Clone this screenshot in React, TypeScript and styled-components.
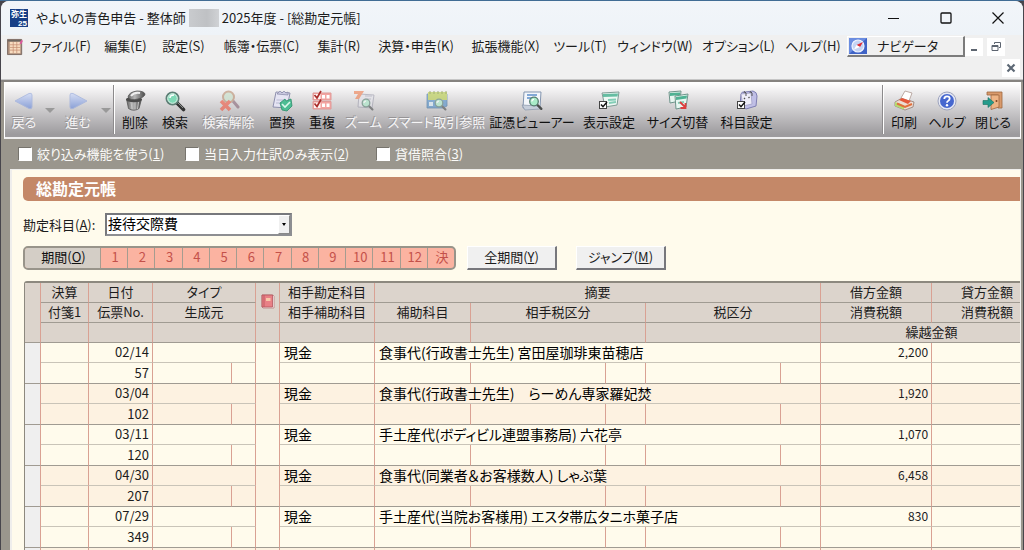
import React from "react";
import styled, { createGlobalStyle, css } from "styled-components";

const c = {
  cream: "#fffbec",
  alt: "#fdf2e1",
  head: "#dcd4cc",
  rule: "#a09b92",
  softRule: "#c9c4b8",
  red: "#d9a193",
  frame: "#9a968d",
  title: "#c48868",
};

const GlobalStyle = createGlobalStyle`
  *, *::before, *::after { box-sizing: border-box; }
  body {
    margin: 0;
    font-family: "Noto Sans CJK JP", "Noto Sans", sans-serif;
    font-size: 13px;
    line-height: 18px;
    font-feature-settings: "palt";
    color: #1c1c1c;
  }
  button, select, input { font: inherit; font-feature-settings: inherit; color: inherit; margin: 0; }
`;

const Desktop = styled.div`
  height: 100vh;
  overflow: hidden;
  padding: 0 1px;
  border-top: 1px solid #416c94;
  background: #47454c;
  display: flex;
  flex-direction: column;
`;
const Window = styled.div`
  flex: 1;
  min-height: 0;
  display: flex;
  flex-direction: column;
  border-radius: 8px 8px 0 0;
  overflow: hidden;
  background: #f0f0f0;
`;
const TitleBar = styled.header`
  height: 34px;
  flex: none;
  display: flex;
  align-items: center;
  padding: 0 14px 1px 9px;
  background: linear-gradient(#f2f5f9, #eef3f8);
`;
const TitleText = styled.div`
  display: flex;
  align-items: center;
  gap: 3px;
  padding-left: 8px;
  flex: 1;
  white-space: nowrap;
`;
const Redacted = styled.span`
  width: 30px;
  height: 18px;
  background: linear-gradient(90deg, #c9cbce, #bfc1c4 60%, #d0d2d5);
`;
const CaptionButtons = styled.div`
  display: flex;
  gap: 30px;
`;
const CaptionButton = styled.button`
  border: 0;
  padding: 0;
  width: 22px;
  height: 22px;
  background: none;
  display: grid;
  place-items: center;
`;
const MenuBar = styled.nav`
  height: 23px;
  flex: none;
  display: flex;
  align-items: center;
  padding: 0 14px 0 6px;
`;
const MenuItem = styled.button<{ $w: number }>`
  width: ${(p) => p.$w}px;
  flex: none;
  border: 0;
  padding: 0 0 2px;
  background: none;
  text-align: center;
  white-space: nowrap;
`;
const NavigatorButton = styled.button`
  width: 118px;
  height: 21px;
  flex: none;
  display: flex;
  align-items: center;
  gap: 10px;
  padding: 0 0 0 1px;
  background: #f0f0f0;
  border: 1px solid #fff;
  border-right: 2px solid #7c7c7c;
  border-bottom: 2px solid #7c7c7c;
`;
const MdiRow = styled.div`
  height: 22px;
  flex: none;
  display: flex;
  justify-content: flex-end;
  padding: 1px 3px 0 0;
  border-bottom: 1px solid #c6c6c6;
`;
const MdiButton = styled.button`
  width: 18px;
  height: 18px;
  flex: none;
  border: 0;
  padding: 0;
  margin-right: 4px;
  background: #fff;
  display: grid;
  place-items: center;
  ${MdiRow} & { margin-right: 0; }
`;
const Client = styled.div`
  flex: 1;
  min-height: 0;
  display: flex;
  flex-direction: column;
  background: ${c.frame};
  border-top: 2px solid #868380;
  padding: 0 2px 0 3px;
`;
const Toolbar = styled.div`
  height: 57px;
  flex: none;
  display: flex;
  padding-right: 4px;
  border: 1px solid #fff;
  border-bottom: 2px solid #f0eff0;
  background: linear-gradient(#fff, #f3f2f3 12%, #9d9b9e 95%);
`;
const ToolButton = styled.button<{ $w: number }>`
  width: ${(p) => p.$w}px;
  flex: none;
  border: 0;
  padding: 7px 0 0;
  background: none;
  display: flex;
  flex-direction: column;
  align-items: center;
  white-space: nowrap;
  color: #111;
  svg { flex: none; }
  &:disabled {
    color: #f6f5f6;
    text-shadow: -1px -1px 0 #969496;
  }
  &:disabled svg { opacity: 0.6; }
`;
const ToolLabel = styled.span`
  height: 20px;
  line-height: 20px;
`;
const Drop = styled.button`
  width: 14px;
  flex: none;
  border: 0;
  padding: 0;
  background: none;
  &::after {
    content: "";
    display: block;
    margin: 0 auto;
    width: 10px;
    border: 5px solid transparent;
    border-top-color: #999;
    border-bottom: 0;
  }
`;
const Divider = styled.span<{ $push?: boolean }>`
  width: 2px;
  flex: none;
  margin: 2px 0 3px;
  border-left: 1px solid #8c8a8c;
  border-right: 1px solid #fff;
  ${(p) => p.$push && css`margin-left: auto;`}
`;
const FilterBar = styled.div`
  height: 30px;
  flex: none;
  display: grid;
  grid-template-columns: 167px 191px auto;
  align-items: center;
  padding-left: 14px;
`;
const CheckLabel = styled.label`
  display: flex;
  align-items: center;
  gap: 5px;
  color: #fbfaf8;
  white-space: nowrap;
  input {
    appearance: none;
    width: 14px;
    height: 14px;
    background: #fff;
    border: 1px solid #77746d;
    border-right-color: #fff;
    border-bottom-color: #fff;
  }
`;
const Content = styled.main`
  flex: 1;
  min-height: 0;
  margin-left: 6px;
  padding: 7px 0 0 11px;
  border: solid #efeeec;
  border-width: 1px 1px 0 2px;
  background: ${c.cream};
  overflow: hidden;
`;
const Heading = styled.h1`
  margin: 0 0 12px;
  height: 24px;
  line-height: 23px;
  padding-left: 13px;
  border-radius: 5px 0 0 5px;
  background: ${c.title};
  color: #fff;
  font-size: 16px;
  font-weight: 700;
`;
const AccountRow = styled.div`
  display: flex;
  align-items: center;
  gap: 7px;
  margin-bottom: 10px;
  label { width: 75px; white-space: nowrap; }
`;
const SelectBox = styled.span`
  position: relative;
  width: 187px;
  height: 23px;
  border: 2px solid #77787c;
  border-right-color: #8d8e92;
  border-bottom-color: #8d8e92;
  background: #fff;
  select {
    appearance: none;
    display: block;
    width: 100%;
    height: 19px;
    line-height: 17px;
    padding: 0 14px 2px 1px;
    border: 0;
    background: none;
    color: #000;
    font-size: 14px;
  }
`;
const SelectArrow = styled.span`
  position: absolute;
  right: 0;
  top: 0;
  width: 12px;
  height: 19px;
  background: #f0f0f0;
  border: 1px solid #fff;
  border-right-color: #888;
  border-bottom-color: #888;
  display: grid;
  place-items: center;
  pointer-events: none;
  &::after {
    content: "";
    border: 2px solid transparent;
    border-top: 3px solid #000;
    border-bottom: 0;
  }
`;
const PeriodRow = styled.div`
  display: flex;
  margin-bottom: 11px;
`;
const PeriodStrip = styled.div`
  width: 433px;
  height: 24px;
  margin-right: 11px;
  display: grid;
  grid-template-columns: 75px repeat(13, 1fr);
  border: 2px solid #98948a;
  border-radius: 5px;
  background: #fbb3a1;
  overflow: hidden;
`;
const PeriodButton = styled.button<{ $main?: boolean }>`
  border: 0;
  border-left: 1px solid #a59c90;
  padding: 0 0 2px 2px;
  background: none;
  color: #c4514a;
  line-height: 18px;
  ${(p) =>
    p.$main &&
    css`
      border-left: 0;
      background: #d4cec6;
      color: #111;
    `}
`;
const PushButton = styled.button`
  width: 90px;
  height: 24px;
  margin-right: 19px;
  padding: 0 0 2px;
  background: #f0f0f0;
  border: 1px solid #fff;
  border-right: 2px solid #77777c;
  border-bottom: 2px solid #77777c;
`;
const GridFrame = styled.div`
  margin-left: 1px;
  border-left: 1px solid #8d897f;
  border-top: 2px solid #8d897f;
  border-top-left-radius: 3px;
  overflow: hidden;
`;
const Grid = styled.table`
  table-layout: fixed;
  border-collapse: separate;
  border-spacing: 0;
  width: 100%;
  min-width: 1018px;
  line-height: 18px;
  th, td {
    padding: 0 0 1px;
    height: 20px;
    border-right: 1px solid ${c.red};
    white-space: nowrap;
    font-weight: 400;
  }
`;
const Th = styled.th`
  background: ${c.head};
  border-bottom: 1px solid ${c.rule};
  text-align: center;
  svg { display: block; margin: 0 auto; }
`;
const EntryTop = styled.tr<{ $alt: boolean }>`
  background: ${(p) => (p.$alt ? c.alt : c.cream)};
  td { border-bottom: 1px solid ${c.softRule}; }
`;
const EntryBottom = styled(EntryTop)`
  td { height: 21px; border-bottom-color: ${c.rule}; }
`;
const RowHead = styled.td`
  && { background: #efefef; border-bottom-color: ${c.rule}; }
`;
const SpanCell = styled.td`
  && { border-bottom-color: ${c.rule}; }
`;
const NumCell = styled.td`
  text-align: right;
  && { padding-right: 3px; }
`;
const AmountCell = styled(NumCell)`
  font-size: 12px;
`;
const TextCell = styled.td`
  font-size: 14px;
  color: #000;
  && { padding-left: 4px; }
`;

type IconName =
  | "back" | "next" | "trash" | "search" | "clear" | "replace" | "dup" | "zoom" | "smart"
  | "viewer" | "display" | "size" | "subject" | "print" | "help" | "close";

const Lens = ({ x, y, r }: { x: number; y: number; r: number }) => (
  <g>
    <path d={`M${x + r * 0.7} ${y + r * 0.7}l${r} ${r}`} stroke="#4a4d4c" strokeWidth={r * 0.55} strokeLinecap="round" />
    <circle cx={x} cy={y} r={r} fill="#a9ecc9" stroke="#567e70" strokeWidth="1.3" />
    <path d={`M${x - r * 0.5} ${y}a${r * 0.5} ${r * 0.5} 0 0 1 ${r * 0.5} ${-r * 0.5}`} stroke="#fff" strokeWidth="1.2" fill="none" />
  </g>
);
const Tick = ({ y }: { y: number }) => (
  <g>
    <rect x="1.5" y={y} width="7" height="7" fill="#fff" stroke="#444" />
    <path d={`M3 ${y + 3}l2 2.2 4-4.6`} stroke="#111" strokeWidth="1.5" fill="none" />
  </g>
);

const drawings: Record<IconName, React.ReactNode> = {
  back: <path d="M2 11L16 3.500q3-1 3 1.500v12q0 2.500-3 1.500z" fill="url(#blueArrow)" stroke="#8fa5de" />,
  next: <path d="M20 11L6 3.500q-3-1-3 1.500v12q0 2.500 3 1.500z" fill="url(#blueArrow)" stroke="#8fa5de" />,
  trash: (
    <g>
      <path d="M2.500 9l2 9.500q5 3.500 10.500 0l2.500-9.500z" fill="url(#metal)" stroke="#555" strokeWidth=".8" />
      <path d="M7 12l1 7M11 12v7.500M14.500 12l-1 7" stroke="#c4c4c4" strokeWidth="1" />
      <ellipse cx="10" cy="9.500" rx="8" ry="2.800" fill="#4a4a4a" />
      <path d="M4 7q1-5 9-6 7 0 8 3 0 3-7 5-8 2-10-2z" fill="url(#metal)" stroke="#555" strokeWidth=".8" />
      <path d="M7 6q3-4 9-3" stroke="#eee" strokeWidth="2" fill="none" />
    </g>
  ),
  search: (
    <g>
      <path d="M13 13l6.500 6.500" stroke="#333" strokeWidth="3.600" strokeLinecap="round" />
      <path d="M14 13l5 5" stroke="#8a8f8d" strokeWidth="1" />
      <circle cx="8.500" cy="8.500" r="6" fill="#7fd9b6" stroke="#5d7f76" strokeWidth="2" />
      <circle cx="8.500" cy="8.500" r="4.800" fill="none" stroke="#dff7ec" />
      <path d="M6 8q0-3 4-3" stroke="#fff" strokeWidth="1.500" fill="none" />
    </g>
  ),
  clear: (
    <g>
      <path d="M15 11l5 6" stroke="#867" strokeWidth="3" strokeLinecap="round" />
      <circle cx="10.500" cy="7" r="5.500" fill="#c5e0c8" stroke="#b98c6d" strokeWidth="2" />
      <path d="M3 11l9 9M12 11l-9 9" stroke="#f0553f" strokeWidth="3.600" />
    </g>
  ),
  replace: (
    <g>
      <path d="M5 2l14 1-3 15-14-1z" fill="#e5e4f3" stroke="#8e90ad" />
      <path d="M7 3l2-2 2 2 2-2 2 2 2-1v3l-11-1z" fill="#c9c8e0" stroke="#8587a6" strokeWidth=".7" />
      <path d="M5.500 10h8M5 13h6" stroke="#b9bad2" />
      <path d="M9 13l5-4 1 2 5-2 1 7-5 5-5-1z" fill="#4dbd94" stroke="#2c8f6b" strokeWidth=".8" />
      <path d="M11 14l3 3 5-5" stroke="#dcf8ec" strokeWidth="1.600" fill="none" />
    </g>
  ),
  dup: (
    <g>
      <path d="M2 3h18v7H2zM2 11.500h18V19H2z" fill="#f3a4a1" stroke="#e09a98" />
      <path d="M11 5h3v3.500h-3zM15.500 5h3v3.500h-3zM11 13.500h3V17h-3zM15.500 13.500h3V17h-3z" fill="#fff" />
      <path d="M3 4h6.500v5H3zM3 12.500h6.500v5.500H3z" fill="#fff5f2" />
      <path d="M3.500 5l2.500 3 4-7M3.500 13.500l2.500 3 4-7" stroke="#a92c2a" strokeWidth="1.700" fill="none" />
    </g>
  ),
  zoom: (
    <g>
      <path d="M6 4l15 1-2 13-14-1z" fill="#e3e3ea" stroke="#9b9bab" />
      <path d="M1 1h10L6 9H2l3-5H1z" fill="#ee7c4c" />
      <path d="M12 6h7M12 9h6" stroke="#a7a7b8" />
      <Lens x={13} y={13} r={3.8} />
    </g>
  ),
  smart: (
    <g>
      <path d="M1 4h20v12l-4 2H1z" fill="#4c8cc9" stroke="#34679b" strokeWidth=".8" />
      <path d="M2 2h19v8H2z" fill="#b5cc45" />
      <path d="M4 1v3M8 1v3M12 1v3M16 1v3M20 1v3" stroke="#70882a" />
      <path d="M3 12h4v4H3z" fill="#d9ecf8" />
      <Lens x={13} y={13} r={3.8} />
    </g>
  ),
  viewer: (
    <g>
      <path d="M3 2h17l-1 15-17 1z" fill="#f3f6fb" stroke="#8395af" />
      <path d="M1 15l17 1 1 3-15 1z" fill="#c6cedb" stroke="#8794a8" strokeWidth=".7" />
      <path d="M6 5h10M6 8h5" stroke="#5d8fca" strokeWidth="1.500" />
      <Lens x={13} y={11.5} r={4.3} />
    </g>
  ),
  display: (
    <g>
      <path d="M4 3l17-1-2 13-12 2z" fill="#eef8f4" stroke="#7f9c95" />
      <path d="M5 4l15-.500-.500 3L5 7z" fill="#65bda2" />
      <path d="M10 10l8-.500M11 13l7-1" stroke="#83cdb6" strokeWidth="2" />
      <Tick y={11.5} />
    </g>
  ),
  size: (
    <g>
      <path d="M2 2l12-1-1 10-10 2z" fill="#e7f7f1" stroke="#6d948a" />
      <path d="M3 3l10-.500v2.500L3 6z" fill="#4eb293" />
      <path d="M8 6l13-2-2 13-10 2z" fill="#e7f7f1" stroke="#6d948a" />
      <path d="M9 7l11-1.500-.500 3L9 10z" fill="#4eb293" />
      <path d="M11 13l6-1" stroke="#83cdb6" strokeWidth="2" />
      <path d="M13 12l5 5M18.500 13v5h-5" stroke="#dc3e3e" strokeWidth="1.800" fill="none" />
    </g>
  ),
  subject: (
    <g>
      <path d="M5 4q1-3 4-2l8-1q4 1 4 5l-1 10-10 3-6-4z" fill="#c0bfe6" stroke="#7f7fb2" />
      <path d="M5 4l10-1 1 11-9 2z" fill="#eeedf8" stroke="#9b9ac0" strokeWidth=".7" />
      <path d="M8 3q0-3 2 0v3M14 3q0-3 2 0v3" stroke="#555" fill="none" />
      <path d="M8 8l1 1M12.500 8l1-1" stroke="#555" strokeWidth="1.300" />
      <Tick y={11.5} />
    </g>
  ),
  print: (
    <g>
      <path d="M2 12l7-4 12 4-1 5-8 3-10-4z" fill="#ecdcd3" stroke="#927b71" strokeWidth=".8" />
      <path d="M8 8l4-7 7 2-3 8z" fill="#fff" stroke="#ad9891" strokeWidth=".8" />
      <path d="M6 10l3-2 9 3-3 3z" fill="#e5573a" />
      <path d="M2 12l9 3.500v4L2 16z" fill="#b3dc6f" />
      <path d="M4 13.500l8 3.500 7-3" stroke="#e0703d" strokeWidth="2" fill="none" />
    </g>
  ),
  help: (
    <g>
      <circle cx="11" cy="11" r="9" fill="#e5e8f4" stroke="#9da3bd" />
      <circle cx="11" cy="11" r="7" fill="#4667cf" />
      <path d="M8.300 9q0-2.700 2.700-2.700t2.700 2.300q0 1.400-1.400 2.200-1.300.7-1.300 2" stroke="#fff" strokeWidth="1.800" fill="none" />
      <circle cx="11" cy="15.200" r="1.200" fill="#fff" />
    </g>
  ),
  close: (
    <g>
      <path d="M5 2h15v16h-4V5H5z" fill="#d99a6c" stroke="#a0673f" strokeWidth=".8" />
      <path d="M9 5l8 0v12l-8 2.500z" fill="#eeb485" stroke="#a0673f" strokeWidth=".8" />
      <circle cx="14.500" cy="11" r="1" fill="#7b4322" />
      <path d="M1 10.500h5V7.500l6 5-6 5v-3H1z" fill="#259b8c" stroke="#16705f" strokeWidth=".6" />
    </g>
  ),
};

const Icon = ({ name }: { name: IconName }) => (
  <svg width="22" height="22" viewBox="0 0 22 22" fill="none" aria-hidden="true">
    <defs>
      <linearGradient id="blueArrow" x1="0" y1="0" x2="0" y2="1">
        <stop offset="0" stopColor="#c8d6fa" />
        <stop offset="1" stopColor="#5f83dc" />
      </linearGradient>
      <linearGradient id="metal" x1="0" y1="0" x2="1" y2="0">
        <stop offset="0" stopColor="#666" />
        <stop offset=".4" stopColor="#b5b5b5" />
        <stop offset="1" stopColor="#4a4a4a" />
      </linearGradient>
    </defs>
    {drawings[name]}
  </svg>
);

const menus: [string, number][] = [
  ["ファイル(F)", 75], ["編集(E)", 55], ["設定(S)", 61], ["帳簿・伝票(C)", 95], ["集計(R)", 60],
  ["決算・申告(K)", 94], ["拡張機能(X)", 85], ["ツール(T)", 64], ["ウィンドウ(W)", 86],
  ["オプション(L)", 81], ["ヘルプ(H)", 68],
];

interface Tool { icon: IconName; label: string; w: number; off?: boolean }
const mainTools: Tool[] = [
  { icon: "trash", label: "削除", w: 40 },
  { icon: "search", label: "検索", w: 40 },
  { icon: "clear", label: "検索解除", w: 67, off: true },
  { icon: "replace", label: "置換", w: 40 },
  { icon: "dup", label: "重複", w: 40 },
  { icon: "zoom", label: "ズーム", w: 43, off: true },
  { icon: "smart", label: "スマート取引参照", w: 103, off: true },
  { icon: "viewer", label: "証憑ビューアー", w: 88 },
  { icon: "display", label: "表示設定", w: 66 },
  { icon: "size", label: "サイズ切替", w: 71 },
  { icon: "subject", label: "科目設定", w: 67 },
];
const endTools: Tool[] = [
  { icon: "print", label: "印刷", w: 40 },
  { icon: "help", label: "ヘルプ", w: 46 },
  { icon: "close", label: "閉じる", w: 46 },
];

const ToolItem = ({ icon, label, w, off }: Tool) => (
  <ToolButton type="button" $w={w} disabled={off}>
    <Icon name={icon} />
    <ToolLabel>{label}</ToolLabel>
  </ToolButton>
);

const months = ["1", "2", "3", "4", "5", "6", "7", "8", "9", "10", "11", "12", "決"];
const columns = [16, 48, 64, 79, 24, 24, 95, 96, 135, 40, 135, 40, 111, 111];
const entries = [
  { date: "02/14", no: "57", text: "食事代(行政書士先生) 宮田屋珈琲東苗穂店", amount: "2,200" },
  { date: "03/04", no: "102", text: "食事代(行政書士先生)　らーめん専家羅妃焚", amount: "1,920" },
  { date: "03/11", no: "120", text: "手土産代(ボディビル連盟事務局) 六花亭", amount: "1,070" },
  { date: "04/30", no: "207", text: "食事代(同業者＆お客様数人) しゃぶ葉", amount: "6,458" },
  { date: "07/29", no: "349", text: "手土産代(当院お客様用) エスタ帯広タニホ菓子店", amount: "830" },
  { date: "", no: "", text: "", amount: "" },
];

export default function App() {
  return (
    <Desktop>
      <GlobalStyle />
      <Window>
        <TitleBar>
          <svg width="18" height="18" viewBox="0 0 18 18" fontFamily="Liberation Sans, Noto Sans CJK JP, sans-serif" fontWeight="700" fill="#fff" aria-hidden="true">
            <rect width="18" height="18" fill="#173f86" />
            <text x="1" y="8" fontSize="8">弥生</text>
            <text x="8" y="17" fontSize="8">25</text>
          </svg>
          <TitleText>
            <span>やよいの青色申告 - 整体師</span>
            <Redacted />
            <span>2025年度 - [総勘定元帳]</span>
          </TitleText>
          <CaptionButtons>
            <CaptionButton type="button" aria-label="最小化">
              <svg width="12" height="12"><path d="M0 6.500h11" stroke="#111" strokeWidth="1" /></svg>
            </CaptionButton>
            <CaptionButton type="button" aria-label="最大化">
              <svg width="12" height="12"><rect x="1" y="1" width="10" height="10" rx="1" fill="none" stroke="#111" strokeWidth="1.300" /></svg>
            </CaptionButton>
            <CaptionButton type="button" aria-label="閉じる">
              <svg width="12" height="12"><path d="M.500.500l11 11M11.500.500l-11 11" stroke="#111" strokeWidth="1.200" /></svg>
            </CaptionButton>
          </CaptionButtons>
        </TitleBar>
        <MenuBar>
          <svg width="18" height="20" viewBox="0 0 18 20" aria-hidden="true">
            <path d="M.500 1.500h16v17H.500z" fill="#a98b78" stroke="#77665e" />
            <path d="M3 4h12v13H3z" fill="#f7dcc0" />
            <path d="M3 7.500h12M3 10.500h12M3 13.500h12M7 4v13M11 4v13" stroke="#c48c70" strokeWidth=".8" />
            <path d="M1 3h15" stroke="#6d6660" strokeWidth="1.500" />
            <path d="M14 6l2-4 2 1-2 4z" fill="#dd5a9d" />
          </svg>
          {menus.map(([label, w]) => (
            <MenuItem key={label} type="button" $w={w}>{label}</MenuItem>
          ))}
          <NavigatorButton type="button">
            <svg width="18" height="16" viewBox="0 0 18 16" aria-hidden="true">
              <rect width="18" height="16" fill="#3f63c6" />
              <path d="M0 16V0h18z" fill="#6b8de0" />
              <circle cx="9" cy="8" r="6" fill="#c4d4f4" stroke="#f0f4ff" strokeWidth="1.200" />
              <path d="M14 4l-3 5-3.500-2z" fill="#e02b34" />
              <path d="M5 11.500l2.500-4.500 3.500 2z" fill="#fff" />
            </svg>
            ナビゲータ
          </NavigatorButton>
          <MdiButton type="button" aria-label="文書を最小化">
            <svg width="10" height="10"><path d="M2 8h6" stroke="#5d6570" strokeWidth="2" /></svg>
          </MdiButton>
          <MdiButton type="button" aria-label="文書を元に戻す">
            <svg width="11" height="11" fill="none" stroke="#5d6570">
              <path d="M3.500 3V1.500h6v5H8" />
              <path d="M1 4.500h6v5H1zM1 5.500h6" />
            </svg>
          </MdiButton>
        </MenuBar>
        <MdiRow>
          <MdiButton type="button" aria-label="文書を閉じる">
            <svg width="10" height="10"><path d="M1.500 1.500l7 7M8.500 1.500l-7 7" stroke="#5d6875" strokeWidth="2.200" /></svg>
          </MdiButton>
        </MdiRow>
        <Client>
          <Toolbar>
            <ToolItem icon="back" label="戻る" w={38} off />
            <Drop type="button" aria-label="戻る履歴" />
            <ToolItem icon="next" label="進む" w={42} off />
            <Drop type="button" aria-label="進む履歴" />
            <Divider />
            {mainTools.map((t) => <ToolItem key={t.label} {...t} />)}
            <Divider $push />
            {endTools.map((t) => <ToolItem key={t.label} {...t} />)}
          </Toolbar>
          <FilterBar>
            <CheckLabel><input type="checkbox" /><span>絞り込み機能を使う(<u>1</u>)</span></CheckLabel>
            <CheckLabel><input type="checkbox" /><span>当日入力仕訳のみ表示(<u>2</u>)</span></CheckLabel>
            <CheckLabel><input type="checkbox" /><span>貸借照合(<u>3</u>)</span></CheckLabel>
          </FilterBar>
          <Content>
            <Heading>総勘定元帳</Heading>
            <AccountRow>
              <label htmlFor="account">勘定科目(<u>A</u>):</label>
              <SelectBox>
                <select id="account"><option>接待交際費</option></select>
                <SelectArrow />
              </SelectBox>
            </AccountRow>
            <PeriodRow>
              <PeriodStrip>
                <PeriodButton type="button" $main>期間(<u>O</u>)</PeriodButton>
                {months.map((m) => <PeriodButton key={m} type="button">{m}</PeriodButton>)}
              </PeriodStrip>
              <PushButton type="button">全期間(<u>Y</u>)</PushButton>
              <PushButton type="button">ジャンプ(<u>M</u>)</PushButton>
            </PeriodRow>
            <GridFrame>
              <Grid>
                <colgroup>
                  {columns.map((w, i) => <col key={i} style={{ width: w }} />)}
                </colgroup>
                <thead>
                  <tr>
                    <Th rowSpan={3} />
                    <Th>決算</Th>
                    <Th>日付</Th>
                    <Th colSpan={2}>タイプ</Th>
                    <Th rowSpan={2}>
                      <svg width="14" height="16" viewBox="0 0 14 16" aria-label="付箋">
                        <path d="M1 1h11l1 1v12H2l-1-1z" fill="#fff" stroke="#b98080" strokeWidth=".8" />
                        <path d="M1 1h10.500v12H1z" fill="#e88086" stroke="#b3545c" strokeWidth=".8" />
                        <path d="M3 1v12" stroke="#c25a62" />
                        <path d="M5 4h4.500v3H5z" fill="#f8c8a8" />
                      </svg>
                    </Th>
                    <Th>相手勘定科目</Th>
                    <Th colSpan={5}>摘要</Th>
                    <Th>借方金額</Th>
                    <Th>貸方金額</Th>
                  </tr>
                  <tr>
                    <Th>付箋1</Th>
                    <Th>伝票No.</Th>
                    <Th colSpan={2}>生成元</Th>
                    <Th>相手補助科目</Th>
                    <Th>補助科目</Th>
                    <Th colSpan={2}>相手税区分</Th>
                    <Th colSpan={2}>税区分</Th>
                    <Th>消費税額</Th>
                    <Th>消費税額</Th>
                  </tr>
                  <tr>
                    <Th />
                    <Th />
                    <Th colSpan={2} />
                    <Th />
                    <Th />
                    <Th />
                    <Th colSpan={2} />
                    <Th colSpan={2} />
                    <Th colSpan={2}>繰越金額</Th>
                  </tr>
                </thead>
                <tbody>
                  {entries.map((e, i) => (
                    <React.Fragment key={i}>
                      <EntryTop $alt={i % 2 === 1}>
                        <RowHead rowSpan={2} />
                        <td />
                        <NumCell>{e.date}</NumCell>
                        <td colSpan={2} />
                        <SpanCell rowSpan={2} />
                        <TextCell>{e.date && "現金"}</TextCell>
                        <TextCell colSpan={5}>{e.text}</TextCell>
                        <AmountCell>{e.amount}</AmountCell>
                        <td />
                      </EntryTop>
                      <EntryBottom $alt={i % 2 === 1}>
                        <td />
                        <NumCell>{e.no}</NumCell>
                        <td />
                        <td />
                        <td />
                        <td />
                        <td />
                        <td />
                        <td />
                        <td />
                        <td />
                        <td />
                      </EntryBottom>
                    </React.Fragment>
                  ))}
                </tbody>
              </Grid>
            </GridFrame>
          </Content>
        </Client>
      </Window>
    </Desktop>
  );
}
